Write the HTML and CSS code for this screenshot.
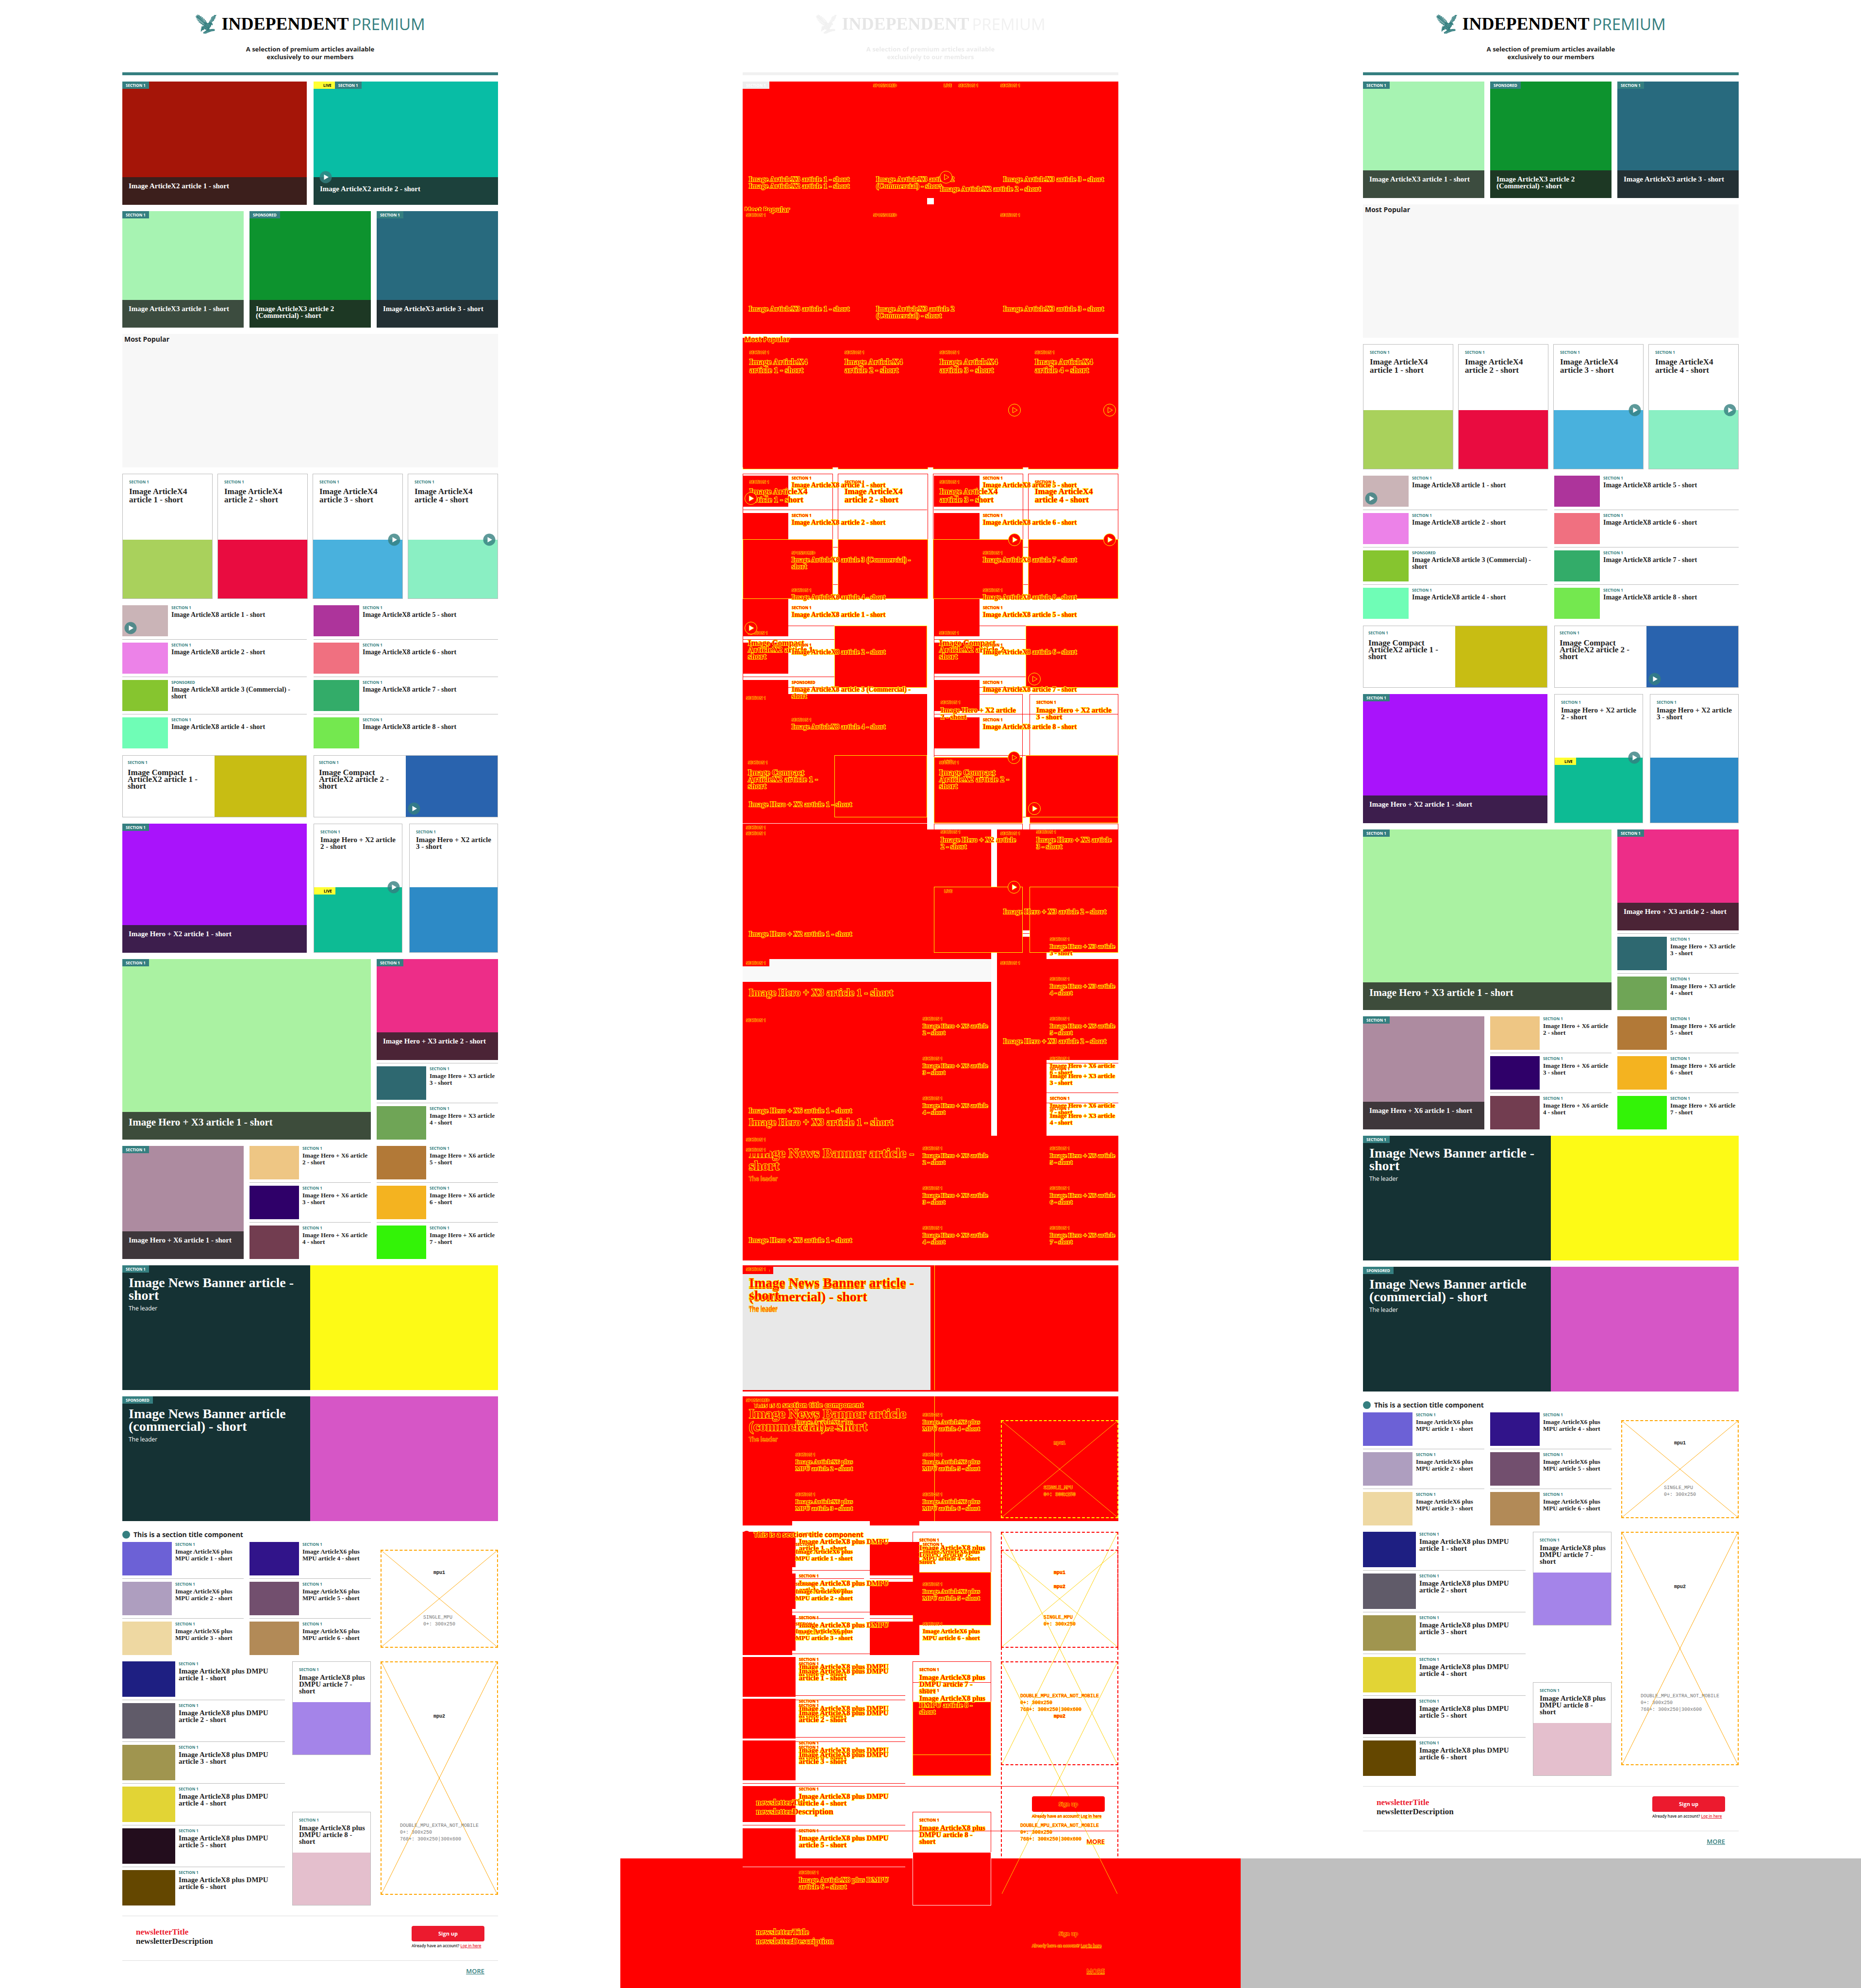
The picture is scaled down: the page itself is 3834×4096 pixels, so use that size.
FILE: index.html
```
<!DOCTYPE html>
<html lang="en">
<head>
<meta charset="utf-8">
<title>Independent Premium</title>
<link rel="stylesheet" href="styles.css">
</head>
<body>
<svg class="defs" aria-hidden="true">
  <symbol id="eagle" viewBox="0 0 57 52">
    <path fill="#357f80" d="M7 0 9 4 11 2 13 6 16 5 17 9 20 8 21 12 24 12 25 15 28 17 30 22 33 24 36 22 38 17 41 13 42 9 45 6 49 4 51 2 53 3 56 2 53 7 53 10 50 14 49 17 45 20 43 23 45 24 46 27 45 30 44 28 42 28 42 31 39 35 37 38 38 40 44 39 50 39 52 42 50 44 43 45 35 48 28 51 22 51 21 48 24 46 28 43 30 41 27 41 24 39 22 42 19 42 17 45 14 45 16 41 14 39 17 38 15 35 18 35 16 32 20 32 24 30 17 29 20 27 12 25 16 24 8 21 12 20 5 17 9 16 3 13 6 12 1 9 4 9 0 5 4 6 3 2 6 4Z"/>
    <g fill="none" stroke="#fff" stroke-width=".6">
      <path d="M6 4 14 12 24 22M4 9 14 17 24 26M6 12 15 20 24 28M9 16 20 25M11 4 17 11 25 20M16 7 21 13 28 22M21 13 27 20"/>
      <path d="M51 5 45 12 39 21M54 6 48 13 41 22M48 5 43 11 38 19"/>
      <path stroke-dasharray="1 1" d="M26 28 34 34M29 26 38 33M33 26 40 30M24 33 32 38M21 36 27 39M24 48 34 45 50 41M24 50 34 47"/>
    </g>
  </symbol>
  <symbol id="play" viewBox="0 0 26 26">
    <circle class="play-disc" cx="13" cy="13" r="12.5"/>
    <path class="play-arrow" d="M9.500 7.500 19 13 9.500 18.500Z"/>
  </symbol>
</svg>
<main class="panels">
  <div class="panel" data-page="before"></div>
  <div class="panel diff">
    <div class="layer layer-b" data-page="after" data-noheader></div>
    <div class="layer layer-a" data-page="before"></div>
  </div>
  <div class="panel" data-page="after"></div>
</main>
<script src="app.js"></script>
</body>
</html>
```
FILE: styles.css
```
* { box-sizing: border-box; margin: 0; padding: 0; }
body { background: #fff; color: #222; font-family: "Open Sans", "Noto Sans", sans-serif; }
a { color: inherit; text-decoration: none; }
.defs { position: absolute; width: 0; height: 0; }

.panels { display: grid; grid-template-columns: repeat(3, 1fr); min-height: 100vh; }
.panel { display: flex; flex-direction: column; }
.page { display: flex; flex-direction: column; gap: 13px; width: 100%; max-width: 774px; margin: 0 auto; }
.filler { flex: 1; background: #bfbfbf; }

/* header */
.header { padding-top: 29px; border-bottom: 6px solid #357f80; text-align: center; }
.logo { display: flex; justify-content: center; line-height: 41px; }
.logo svg { width: 45px; height: 41px; margin-right: 9px; }
.logo-name { font: bold 36px/41px "Liberation Serif", serif; color: #000; }
.logo-premium { margin-left: 6px; font-size: 33px; font-weight: normal; color: #357f80; }
.tagline { max-width: 290px; margin: 23px auto 24px; font-size: 13px; font-weight: bold; line-height: 16px; }

/* shared parts */
.grid { display: grid; }
.two { grid-template-columns: 1fr 1fr; gap: 14px; }
.three { grid-template-columns: repeat(3, 1fr); gap: 12px; }
.four { grid-template-columns: repeat(4, 1fr); gap: 10px; }
.wide-left { grid-template-columns: 512px 1fr; gap: 12px; }
.img { position: relative; background: var(--c); }
.title { font: bold 15px/14px "Liberation Serif", serif; }
.label { font-size: 8px; font-weight: bold; line-height: 10px; color: #357f80; text-transform: uppercase; }
.play { position: absolute; width: 26px; height: 26px; z-index: 3; overflow: visible; }
.play-disc { fill: var(--disc, #357f80); fill-opacity: var(--disc-opacity, .8); stroke: var(--play-line, none); }
.play-arrow { fill: var(--arrow, #fff); stroke: var(--play-line, none); }

.tags { position: absolute; top: 0; left: 0; z-index: 2; display: flex; }
.tag { padding: 0 7px; background: #357f80; color: #fff; font-size: 8px; font-weight: bold; line-height: 15px; text-transform: uppercase; }
.tag.live { padding-left: 20px; background: #ffff32; color: #000; }

/* picture with a caption over its foot */
.hero { display: grid; position: relative; }
.hero > .img, .hero > .caption { grid-area: 1 / 1; }
.caption { position: relative; align-self: end; height: 57px; padding: 11px 13px; background: rgba(34, 34, 34, .8); color: #fff; }
.caption .play { top: -13px; left: 12px; }
.caption.has-play { padding-top: 17px; }
.x2 .hero { height: 254px; }
.x3 .hero { height: 240px; }
.hero-x2 { min-height: 266px; }
.hero-x3 { min-height: 372px; }
.hero-x3 > .hero .title { font-size: 21px; line-height: 21px; }
.hero-x3 .stack .hero { height: 208px; }
.hero-x6 { min-height: 233px; }

/* bordered card */
.card { display: flex; flex-direction: column; border: 1px solid #bbb; }
.card .copy { padding: 11px 5px 0 13px; }
.card .img { flex: none; }
.card .label { margin-bottom: 4px; }
.card .img .play { top: -13px; right: 4px; }
.x4 .card { height: 258px; justify-content: space-between; }
.x4 .img { height: 121px; }
.x4 .title { font-size: 17px; line-height: 17px; }
.x4 .label { margin-bottom: 6px; }
.hero-x2 .card { justify-content: space-between; }
.hero-x2 .card .img { height: 134px; }
.compact .card { flex-direction: row; height: 128px; }
.compact .copy { flex: 1; padding: 9px 10px; }
.compact .label { margin-bottom: 9px; }
.compact .title { font-size: 17px; }
.compact .img { width: 50%; }
.compact .img .play, .row .img .play { top: auto; right: auto; bottom: 4px; left: 4px; }

/* thumbnail rows */
.row { display: flex; gap: 7px; }
.row + .row, .hero + .row { border-top: 1px solid #bbb; margin-top: 6px; padding-top: 6px; }
.row .img { flex: none; width: 102px; height: 69px; }
.row .copy { flex: 1; }
.row .label { margin-bottom: 3px; }
.row .title { font-size: 13px; }
.x8 { min-height: 296px; }
.x8 .row .img { width: 94px; height: 64px; }
.x8 .row .title { padding-right: 7px; font-size: 14px; }
.dmpu-list .row .img { width: 109px; height: 73px; }
.dmpu-list .row .title { font-size: 15px; }
.dmpu { display: grid; grid-template-columns: 1fr 162px; gap: 15px; }
.dmpu-cards { display: flex; flex-direction: column; justify-content: space-between; }
.dmpu-cards .copy { height: 83px; }
.dmpu-cards .img { height: 108px; }

.popular { min-height: 275px; background: #f7f7f7; padding: 1px 4px; position: relative; }
.popular h2 { font-size: 14px; line-height: 20px; }

.banner { display: grid; grid-template-columns: 1fr 1fr; position: relative; height: 257px; }
.banner-copy { padding: 23px 13px; background: #153234; color: #fff; }
.banner .title { font-size: 28px; line-height: 26px; }
.leader { margin-top: 6px; font-size: 12px; line-height: 16px; }

.section-title { display: flex; align-items: center; gap: 7px; height: 30px; font-size: 14px; line-height: 16px; }
.dot { width: 16px; height: 16px; border-radius: 50%; background: #357f80; }

.mpu { position: relative; display: flex; flex-direction: column; justify-content: space-around; align-items: center; align-self: center; justify-self: end; width: 242px; height: 202px; border: 2px dashed #ffa500; font: 10px/14px "Liberation Mono", monospace; }
.mpu.tall { align-self: start; height: 481px; }
.mpu svg { position: absolute; inset: 0; width: 100%; height: 100%; }
.mpu line { stroke: #ffa500; stroke-width: 1; }
.mpu p { color: #777; white-space: pre; }

.newsletter { display: flex; justify-content: space-between; align-items: flex-start; height: 93px; margin-top: 8px; padding: 20px 28px 0; border: solid #ddd; border-width: 1px 0; }
.newsletter-copy { padding-top: 3px; font: bold 17px/19px "Liberation Serif", serif; }
.newsletter-copy h2 { font-size: 17px; color: #ec1a2e; }
.signup { width: 150px; }
.signup button { display: block; width: 100%; height: 32px; border: 0; border-radius: 4px; background: #ec1a2e; color: #fff; font: bold 11px/32px "Open Sans", sans-serif; }
.signup p { margin-top: 3px; font-size: 8px; font-weight: 600; line-height: 12px; white-space: nowrap; }
.signup a { color: #ec1a2e; text-decoration: underline; }
.more { margin-top: -13px; padding: 12px 28px 26px; text-align: right; font-size: 13px; font-weight: 600; line-height: 18px; color: #357f80; }
.more a { text-decoration: underline; }

/* comparison: both pages stacked, every changed area in red */
.diff { display: grid; --disc: #f00; --disc-opacity: 1; --arrow: #f00; --play-line: #ff0; }
.diff .row, .diff .layer-a .card { --arrow: #fff; }
.layer { grid-area: 1 / 1; display: flex; flex-direction: column; }
.layer-b { padding-top: 168px; }
.diff .header { filter: grayscale(1) opacity(.1); }
.diff .img, .diff .popular, .diff .banner-copy, .diff .tag, .diff .dot, .diff .filler, .diff button { background: #f00; }
.diff .caption { background: none; }
.diff .card, .diff .row, .diff .newsletter { border-color: #f00; }
.diff .card .img { box-shadow: 0 0 0 1px #ff0; }
.diff .title, .diff .label, .diff .tag, .diff .popular h2, .diff .leader, .diff .section-title h2, .diff .newsletter h2, .diff .newsletter p, .diff .signup a, .diff button, .diff .more, .diff .mpu strong, .diff .mpu p { position: relative; z-index: 2; color: #f00; -webkit-text-stroke: 1px #ff0; paint-order: stroke fill; }
.diff .title, .diff .popular h2, .diff .section-title h2, .diff .newsletter-copy h2, .diff .newsletter-copy p { -webkit-text-stroke: 2px #ff0; }
.diff .mpu { z-index: 1; border-color: #f00; }
.diff .layer-b .mpu:not(.tall) { border-color: #ff0; }
.diff .mpu line { stroke: #ffd000; }
.diff .layer-a .x2 .hero:first-child .tag { background: #ededed; color: #fff; -webkit-text-stroke: 0; }
.diff .layer-a .popular::before { content: ""; position: absolute; inset: 0 0 auto; height: 8px; background: #fff; }
.diff .layer-a .hero-x3 > .hero::before { content: ""; position: absolute; inset: 0 0 auto; z-index: 1; height: 47px; background: #f9f9f9; }
.diff .layer-a .banner .img { background: linear-gradient(90deg, #f00 8px, #ff0 8px, #ff0 9px, #f00 9px); }
.diff .layer-a .banner.first .banner-copy { border-top: 3px solid #f00; padding-top: 20px; background: #e8e8e8; }
.diff .layer-a .dmpu-list .row:last-child { border-color: #fff; }
.diff .layer-a .dmpu-cards .card:last-child .img { box-shadow: 0 0 0 1px #fff; }
```
FILE: app.js
```
const play = '<svg class="play" viewBox="0 0 26 26" aria-label="Play"><use href="#play"/></svg>';
const img = (a) => `<div class="img" style="--c:${a.c}">${a.play ? play : ''}</div>`;
const title = (a) => `<h3 class="title"><a href="#">${a.t}</a></h3>`;
const copy = (a) => `<div class="copy"><p class="label">${a.s || 'Section 1'}</p>${title(a)}</div>`;
const tags = (a) => `<div class="tags">${a.live ? '<span class="tag live">Live</span>' : ''}${a.notag ? '' : `<span class="tag">${a.s || 'Section 1'}</span>`}</div>`;
const hero = (a) => `<article class="hero"><div class="img" style="--c:${a.c}"></div><div class="caption${a.play ? ' has-play' : ''}">${a.play ? play : ''}${title(a)}</div>${tags(a)}</article>`;
const row = (a) => `<article class="row">${img(a)}${copy(a)}</article>`;
const card = (a) => `<article class="card">${copy(a)}<div class="img" style="--c:${a.c}">${a.live ? tags({ live: true, notag: true }) : ''}${a.play ? play : ''}</div></article>`;
const banner = (a) => `<article class="banner ${a.k || ''}"><div class="banner-copy">${title(a)}<p class="leader">The leader</p></div><div class="img" style="--c:${a.c}"></div>${tags(a)}</article>`;
const mpu = (name, text, tall) => `<div class="mpu ${tall ? 'tall' : ''}"><svg aria-hidden="true"><line x1="0" y1="0" x2="100%" y2="100%"/><line x1="100%" y1="0" x2="0" y2="100%"/></svg><strong>${name}</strong><p>${text}</p></div>`;

const series = (name, from, colours, extra = {}) =>
  colours.map((c, i) => ({ c, t: `${name} article ${from + i} - short`, ...(extra[from + i] || {}) }));
const stack = (list, f = row) => `<div class="stack">${list.map(f).join('')}</div>`;

const header = `<header class="header"><h1 class="logo"><svg aria-hidden="true"><use href="#eagle"/></svg><span class="logo-name">INDEPENDENT</span><span class="logo-premium">PREMIUM</span></h1><p class="tagline">A selection of premium articles available exclusively to our members</p></header>`;

const x2 = series('Image ArticleX2', 1, ['#a51508', '#08bda5'], { 2: { live: true, play: true } });
const x3 = series('Image ArticleX3', 1, ['#a7f3b2', '#0d932e', '#286a7e'], { 2: { s: 'Sponsored', t: 'Image ArticleX3 article 2 (Commercial) - short' } });
const x4 = series('Image ArticleX4', 1, ['#a9d15c', '#e90c40', '#49b1dd', '#8aefc3'], { 3: { play: true }, 4: { play: true } });
const x8 = series('Image ArticleX8', 1, ['#cab4b7', '#ec82e8', '#86c52f', '#6ffdb6', '#ad349b', '#f07080', '#33ac69', '#74e84f'],
  { 1: { play: true }, 3: { s: 'Sponsored', t: 'Image ArticleX8 article 3 (Commercial) - short' } });
const compact = series('Image Compact ArticleX2', 1, ['#c8bd13', '#2963ae'], { 2: { play: true } });
const h2 = series('Image Hero + X2', 1, ['#a913fb', '#0dbb94', '#2d8ac6'], { 2: { live: true, play: true } });
const h3 = series('Image Hero + X3', 1, ['#aaf2a2', '#ed2d88', '#2e6870', '#6fa556']);
const h6 = series('Image Hero + X6', 1, ['#ad8ba0', '#eec684', '#2f0069', '#723d50', '#b27937', '#f4b320', '#33f307']);
const m6 = series('Image ArticleX6 plus MPU', 1, ['#6c61d6', '#ae9ebf', '#eed8a2', '#31148a', '#724f6e', '#b28a57']);
const d8 = series('Image ArticleX8 plus DMPU', 1, ['#1e1f82', '#605b69', '#a0954f', '#e2d435', '#230d1d', '#644700', '#a484e9', '#e4bfcd']);

function page(withX2, withHeader) {
  return `<div class="page">
    ${withHeader ? header : ''}
    ${withX2 ? `<section class="grid two x2">${x2.map(hero).join('')}</section>` : ''}
    <section class="grid three x3">${x3.map(hero).join('')}</section>
    <section class="popular"><h2>Most Popular</h2></section>
    <section class="grid four x4">${x4.map(card).join('')}</section>
    <section class="grid two x8">${stack(x8.slice(0, 4))}${stack(x8.slice(4))}</section>
    <section class="grid two compact">${compact.map((a) => `<article class="card">${copy(a)}${img(a)}</article>`).join('')}</section>
    <section class="grid two hero-x2">${hero(h2[0])}<div class="grid two">${h2.slice(1).map(card).join('')}</div></section>
    <section class="grid wide-left hero-x3">${hero(h3[0])}<div class="stack">${hero(h3[1])}${h3.slice(2).map(row).join('')}</div></section>
    <section class="grid three hero-x6">${hero(h6[0])}${stack(h6.slice(1, 4))}${stack(h6.slice(4))}</section>
    ${banner({ t: 'Image News Banner article - short', c: '#fdfa16', k: 'first' })}
    ${banner({ t: 'Image News Banner article (commercial) - short', c: '#d656c6', s: 'Sponsored' })}
    <section>
      <div class="section-title"><span class="dot"></span><h2 class="section-title">This is a section title component</h2></div>
      <div class="grid three">${stack(m6.slice(0, 3))}${stack(m6.slice(3))}${mpu('mpu1', 'SINGLE_MPU\n0+: 300x250')}</div>
    </section>
    <section class="grid wide-left">
      <div class="dmpu"><div class="dmpu-list">${d8.slice(0, 6).map(row).join('')}</div><div class="dmpu-cards">${d8.slice(6).map(card).join('')}</div></div>
      ${mpu('mpu2', 'DOUBLE_MPU_EXTRA_NOT_MOBILE\n0+: 300x250\n768+: 300x250|300x600', true)}
    </section>
    <section class="newsletter">
      <div class="newsletter-copy"><h2>newsletterTitle</h2><p>newsletterDescription</p></div>
      <div class="signup"><button type="button">Sign up</button><p>Already have an account? <a href="#">Log in here</a></p></div>
    </section>
    <footer class="more"><a href="#">MORE</a></footer>
  </div>`;
}

document.querySelectorAll('[data-page]').forEach((el) => {
  const before = el.dataset.page === 'before';
  el.innerHTML = page(before, !('noheader' in el.dataset)) + (before ? '' : '<div class="filler"></div>');
});
```
